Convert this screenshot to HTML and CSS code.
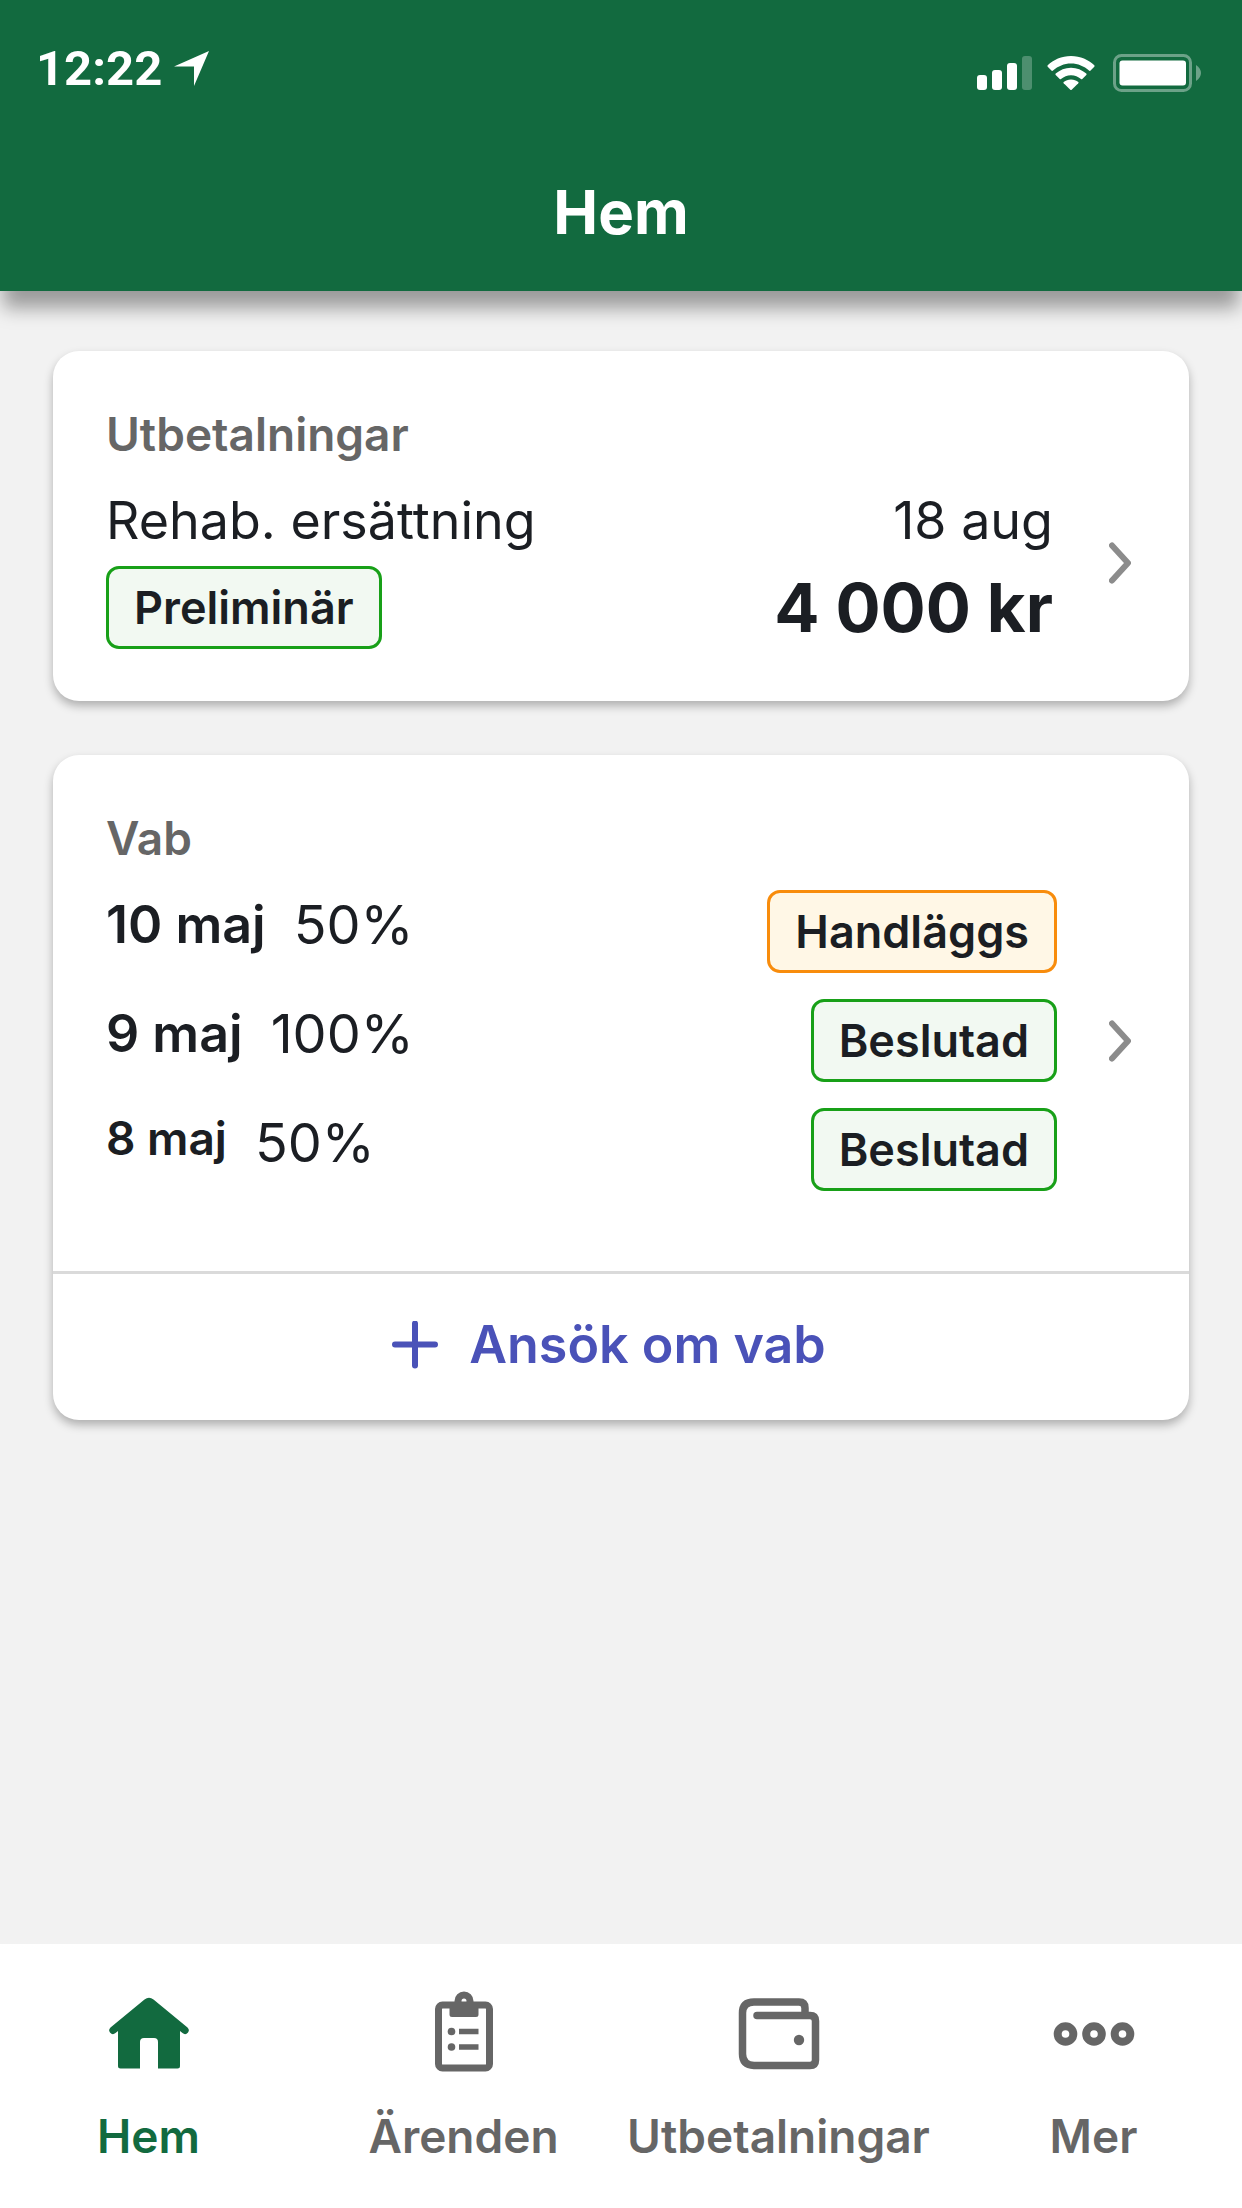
FILE: index.html
```html
<!DOCTYPE html>
<html lang="sv">
<head>
  <meta charset="utf-8">
  <meta name="viewport" content="width=device-width, initial-scale=1">
  <title>Hem</title>
  <link rel="stylesheet" href="styles.css">
</head>
<body>
  <header class="app-header">
    <div class="status-bar">
      <div class="status-group status-time">
        <time class="clock">12:22</time>
        <svg width="36" height="36" viewBox="0 0 36 36" fill="#fff" aria-hidden="true"><path d="M0 15.500 35 0 20 35V15.500Z"/></svg>
      </div>
      <div class="status-group">
        <svg width="56" height="34" viewBox="0 0 56 34" fill="#fff" aria-hidden="true">
          <rect y="19" width="10" height="15" rx="3"/>
          <rect x="15" y="14" width="10" height="20" rx="3"/>
          <rect x="30" y="7" width="10" height="27" rx="3"/>
          <rect x="45" width="10" height="34" rx="3" opacity=".25"/>
        </svg>
        <svg class="wifi" width="48" height="34" viewBox="0 0 48 34" fill="#fff" aria-hidden="true">
          <path d="M24 0C33.500 0 41.500 3.800 47.300 9.300Q47.900 10 47.300 10.700L43.300 14.700Q42.700 15.200 42 14.600C37 10.300 31 7.600 24 7.600S11 10.300 6 14.600Q5.300 15.200 4.700 14.700L.7 10.700Q.1 10 .7 9.300C6.500 3.800 14.500 0 24 0Z"/>
          <path d="M24 11.800C30 11.800 35 14 39.300 17.600Q40 18.300 39.300 19L35.300 22.900Q34.700 23.400 34 22.900C31 20.600 28 19.200 24 19.200S17 20.600 14 22.900Q13.300 23.400 12.700 22.900L8.700 19Q8 18.300 8.700 17.600C13 14 18 11.800 24 11.800Z"/>
          <path d="M24 23.600C27 23.600 29.300 24.500 31.300 26Q31.900 26.600 31.300 27.200L24.700 33.700Q24 34.200 23.300 33.700L16.700 27.200Q16.100 26.600 16.700 26C18.700 24.500 21 23.600 24 23.600Z"/>
        </svg>
        <svg width="89" height="38" viewBox="0 0 89 38" fill="#fff" aria-hidden="true">
          <rect x="1.500" y="1.500" width="76" height="35" rx="7" fill="none" stroke="#fff" stroke-width="3" opacity=".38"/>
          <rect x="6.500" y="6.500" width="66.500" height="25" rx="3"/>
          <path d="M83 11Q88 14.500 88 19T83 27Z" opacity=".38"/>
        </svg>
      </div>
    </div>
    <h1 class="page-title">Hem</h1>
  </header>

  <main class="content">
    <section class="card">
      <a class="card-link" href="#utbetalningar">
        <h2 class="card-title">Utbetalningar</h2>
        <div class="card-body">
          <div class="payment-row">
            <span>Rehab. ersättning</span>
            <time>18 aug</time>
          </div>
          <div class="payment-row">
            <span class="badge badge-done">Preliminär</span>
            <strong class="amount">4 000 kr</strong>
          </div>
        </div>
        <svg class="chevron" width="22" height="42" viewBox="0 0 22 42" aria-hidden="true"><path d="M3 3.500 19 21 3 38.500"/></svg>
      </a>
    </section>

    <section class="card">
      <a class="card-link card-link-vab" href="#vab">
        <h2 class="card-title">Vab</h2>
        <ul class="card-body days">
          <li class="day"><span class="day-text"><strong class="date">10 maj</strong><span>50%</span></span><span class="badge badge-pending">Handläggs</span></li>
          <li class="day"><span class="day-text"><strong class="date">9 maj</strong><span>100%</span></span><span class="badge badge-done">Beslutad</span></li>
          <li class="day"><span class="day-text"><strong class="date date-small">8 maj</strong><span>50%</span></span><span class="badge badge-done">Beslutad</span></li>
        </ul>
        <svg class="chevron" width="22" height="42" viewBox="0 0 22 42" aria-hidden="true"><path d="M3 3.500 19 21 3 38.500"/></svg>
      </a>
      <button class="card-action" type="button">
        <svg width="48" height="48" viewBox="0 0 48 48" aria-hidden="true"><path d="M24 2.500V44.500M4 23.500H44"/></svg>
        Ansök om vab
      </button>
    </section>
  </main>

  <nav class="tab-bar">
    <a class="tab tab-active" href="#hem" aria-current="page">
      <svg width="84" height="84" viewBox="0 0 84 84" aria-hidden="true">
        <path fill="currentColor" d="M37.500 10.500Q42 7 46.500 10.500L80.500 38.500Q83 41 81 43.500Q78.500 46.500 75.500 44L73 42V77Q73 79.500 70.500 79.500H51V53Q51 49 47 49H37Q33 49 33 53V79.500H13.500Q11 79.500 11 77V42L8.500 44Q5.500 46.500 3 43.500Q1 41 3.500 38.500Z"/>
      </svg>
      Hem
    </a>
    <a class="tab" href="#arenden">
      <svg width="84" height="84" viewBox="0 0 84 84" fill="none" stroke="currentColor" aria-hidden="true">
        <rect x="16.500" y="16" width="51" height="63" rx="4" stroke-width="7"/>
        <path fill="currentColor" stroke="none" fill-rule="evenodd" d="M32.500 17V12A9.500 9.500 0 0 1 51.500 12V17H56.500V25.500Q56.500 28 54 28H30Q27.500 28 27.500 25.500V17ZM42 9.500A2.500 2.800 0 1 0 42 15.100A2.500 2.800 0 1 0 42 9.500Z"/>
        <path stroke-width="5.500" d="M37 42.500H56.500M37 58H56.500"/>
        <circle cx="29.500" cy="42.500" r="3.800" fill="currentColor" stroke="none"/>
        <circle cx="29.500" cy="58" r="3.800" fill="currentColor" stroke="none"/>
      </svg>
      Ärenden
    </a>
    <a class="tab" href="#betalningar">
      <svg width="84" height="84" viewBox="0 0 84 84" fill="none" stroke="currentColor" stroke-width="7.500" aria-hidden="true">
        <path stroke-linecap="round" d="M20 26.500H73Q78.500 26.500 78.500 32V71Q78.500 76.500 73 76.500H17Q5.500 76 5.500 65V24Q5.500 13 17 13H62Q68 13 68 19V25"/>
        <circle cx="62" cy="51" r="5.200" fill="currentColor" stroke="none"/>
      </svg>
      Utbetalningar
    </a>
    <a class="tab" href="#mer">
      <svg width="84" height="84" viewBox="0 0 84 84" fill="none" stroke="currentColor" stroke-width="8" aria-hidden="true">
        <circle cx="13.500" cy="45" r="7.800"/>
        <circle cx="42" cy="45" r="7.800"/>
        <circle cx="70.500" cy="45" r="7.800"/>
      </svg>
      Mer
    </a>
  </nav>
</body>
</html>
```
FILE: styles.css
```css
:root {
  --green: #126a3f;
  --ink: #1b1e23;
  --grey: #666;
  --blue: #4a52b8;
}

* {
  box-sizing: border-box;
}

body {
  margin: 0;
  min-height: 100vh;
  display: flex;
  flex-direction: column;
  background: #f2f2f2;
  color: var(--ink);
  font-family: Inter, "Liberation Sans", sans-serif;
  font-size: 52px;
}

svg {
  display: block;
  flex: none;
}

/* Header */
.app-header {
  background: var(--green);
  color: #fff;
  box-shadow: 0 20px 18px -3px rgba(0, 0, 0, 0.36);
}

.status-bar {
  display: flex;
  justify-content: space-between;
  align-items: center;
  height: 146px;
  padding: 0 40px 0 36px;
}

.status-group {
  display: flex;
  align-items: center;
  gap: 14px;
}

.status-time {
  gap: 12px;
  padding-bottom: 8px;
}

.status-group .wifi {
  margin-right: 4px;
}

.clock {
  font: 700 49px/60px Roboto, sans-serif;
}

.page-title {
  margin: 0;
  padding-bottom: 13px;
  text-align: center;
  font-size: 60px;
  font-weight: 700;
  line-height: 132px;
}

/* Cards */
.content {
  flex: 1;
  display: flex;
  flex-direction: column;
  gap: 54px;
  padding: 60px 53px;
}

.card {
  overflow: hidden;
  border-radius: 26px;
  background: #fff;
  box-shadow: 0 5px 10px rgba(0, 0, 0, 0.28);
}

.card-link {
  display: grid;
  grid-template-columns: 1fr auto;
  column-gap: 52px;
  row-gap: 14px;
  align-items: center;
  padding: 55px 58px 52px 53px;
  color: inherit;
  text-decoration: none;
}

.card-link-vab {
  row-gap: 24px;
  padding-bottom: 80px;
}

.card-title {
  grid-column: 1 / -1;
  margin: 0;
  color: var(--grey);
  font-size: 46px;
  font-weight: 600;
  line-height: 56px;
}

.chevron {
  fill: none;
  stroke: #8c8c8c;
  stroke-width: 6;
  stroke-linecap: round;
  stroke-linejoin: round;
}

.payment-row {
  display: flex;
  justify-content: space-between;
  align-items: center;
  padding-right: 4px;
  line-height: 90px;
}

.amount {
  font-size: 67px;
  font-weight: 700;
  line-height: 83px;
}

.badge {
  padding: 1px 25px 0;
  border: 3px solid;
  border-radius: 13px;
  color: var(--ink);
  font-size: 45px;
  font-weight: 600;
  line-height: 76px;
}

.badge-done {
  border-color: #18a018;
  background: #f2f9f2;
}

.badge-pending {
  border-color: #f88c0c;
  background: #fff7e6;
}

.days {
  display: flex;
  flex-direction: column;
  gap: 26px;
  margin: 0;
  padding: 0;
  list-style: none;
}

.day {
  display: flex;
  justify-content: space-between;
  align-items: flex-start;
}

.day-text {
  display: flex;
  gap: 28px;
  font-size: 54px;
  line-height: 70px;
}

.date {
  font-size: 52px;
  font-weight: 600;
}

.date-small {
  font-size: 46px;
  line-height: 60px;
}

.card-action {
  display: flex;
  justify-content: center;
  align-items: center;
  gap: 30px;
  width: 100%;
  padding: 35px 25px 39px 0;
  border: 0;
  border-top: 3px solid #dadada;
  background: none;
  color: var(--blue);
  font: inherit;
  font-weight: 600;
  line-height: 72px;
}

.card-action svg {
  fill: none;
  stroke: currentColor;
  stroke-width: 6;
  stroke-linecap: round;
}

/* Tab bar */
.tab-bar {
  display: grid;
  grid-template-columns: repeat(4, minmax(0, 1fr));
  column-gap: 18px;
  padding: 45px 0 44px;
  background: #fff;
}

.tab {
  display: flex;
  flex-direction: column;
  align-items: center;
  gap: 35px;
  color: var(--grey);
  font-size: 46px;
  font-weight: 600;
  line-height: 56px;
  text-decoration: none;
}

.tab-active {
  color: var(--green);
}
```
